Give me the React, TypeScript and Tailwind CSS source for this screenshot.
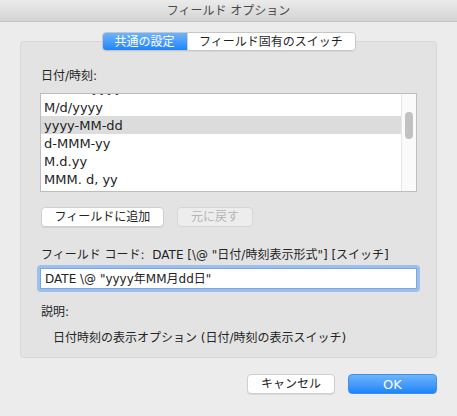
import React from 'react';

// Date format list shown in the dialog
const FORMATS = ['MM/dd/yyyy', 'M/d/yyyy', 'yyyy-MM-dd', 'd-MMM-yy', 'M.d.yy', 'MMM. d, yy'];
const SELECTED = 'yyyy-MM-dd';

const FONT = { fontFamily: '"DejaVu Sans", "Noto Sans CJK JP", sans-serif' };

const Segment: React.FC<{ active?: boolean; children: React.ReactNode; className?: string }> = ({
  active,
  children,
  className = '',
}) => (
  <div
    className={`h-full flex items-center leading-none ${
      active
        ? 'bg-gradient-to-b from-[#6db3fb] to-[#1a84fb] text-white'
        : 'bg-white text-[#1f1f1f]'
    } ${className}`}
  >
    {children}
  </div>
);

export default function App() {
  return (
    <div className="w-[457px] h-[416px] bg-[#ececec] text-[12px] text-[#232323] overflow-hidden" style={FONT}>
      {/* title bar */}
      <div className="h-[22px] bg-gradient-to-b from-[#ebebeb] to-[#d4d4d4] border-b border-[#c4c4c4] flex items-center justify-center text-[12px] text-[#4a4a4a]">
        フィールド オプション
      </div>

      <div className="px-[20px] pt-[10px] flex flex-col">
        {/* segmented tabs */}
        <div className="flex justify-center relative z-10">
          <div className="h-[19px] flex rounded-[4px] border border-[#c6c6c6] overflow-hidden shadow-[0_1px_0_rgba(0,0,0,0.05)]">
            <Segment active className="w-[84px] justify-center">共通の設定</Segment>
            <Segment className="w-[168px] justify-center border-l border-[#d0d0d0]">フィールド固有のスイッチ</Segment>
          </div>
        </div>

        {/* group box */}
        <div className="-mt-[10px] h-[317px] rounded-[4px] border border-[#d7d7d7] bg-[#e3e3e3] px-[19px] pt-[26px] flex flex-col">
          <div className="h-[16px] leading-[16px] pl-[1px]">日付/時刻:</div>

          <div className="mt-[9px] h-[99px] border border-[#bdbdbd] bg-white flex overflow-hidden">
            <div className="flex-1 overflow-hidden">
              <div className="-mt-[14px] text-[13px]">
                {FORMATS.map((f, i) => (
                  <div
                    key={f}
                    className={`h-[18px] leading-[16px] pl-[3px] ${i === 0 ? 'pt-0' : 'pt-[2px]'} ${
                      f === SELECTED ? 'bg-[#dcdcdc]' : ''
                    }`}
                  >
                    {f}
                  </div>
                ))}
              </div>
            </div>
            <div className="w-[15px] border-l border-[#e6e6e6] bg-[#fafafa]">
              <div className="ml-[3px] mt-[18px] w-[8px] h-[27px] rounded-full bg-[#c2c2c2]" />
            </div>
          </div>

          <div className="mt-[15px] flex gap-[13px] pl-[1px]">
            <button className="w-[123px] h-[20px] rounded-[4px] bg-white border border-[#cfcfcf] shadow-[0_1px_0_rgba(0,0,0,0.08)] leading-none">
              フィールドに追加
            </button>
            <button className="w-[76px] h-[20px] rounded-[4px] bg-[#ededed] border border-[#d6d6d6] text-[#b5b5b5] leading-none">
              元に戻す
            </button>
          </div>

          <div className="mt-[20px] h-[16px] leading-[16px] pl-[1px] whitespace-nowrap">
            フィールド コード:&nbsp; DATE [\@ "日付/時刻表示形式"] [スイッチ]
          </div>

          <div className="mt-[2px] -mx-[3px] h-[27px] rounded-[4px] bg-[#9cbfef] p-[3px]">
            <div className="h-full bg-white border border-[#7ea6de] flex items-center pl-[4px] whitespace-nowrap">
              DATE \@ "yyyy年MM月dd日"
            </div>
          </div>

          <div className="mt-[12px] h-[16px] leading-[16px] pl-[1px]">説明:</div>
          <div className="mt-[10px] h-[16px] leading-[16px] pl-[13px] whitespace-nowrap">
            日付時刻の表示オプション (日付/時刻の表示スイッチ)
          </div>
        </div>

        {/* dialog buttons */}
        <div className="mt-[16px] flex justify-end gap-[13px]">
          <button className="w-[88px] h-[20px] rounded-[4px] bg-white border border-[#cfcfcf] shadow-[0_1px_0_rgba(0,0,0,0.08)] leading-none">
            キャンセル
          </button>
          <button className="w-[89px] h-[20px] rounded-[4px] bg-gradient-to-b from-[#6cb3fa] to-[#1a85fb] border border-[#3d8ef0] text-white text-[13px] leading-none">
            OK
          </button>
        </div>
      </div>
    </div>
  );
}
